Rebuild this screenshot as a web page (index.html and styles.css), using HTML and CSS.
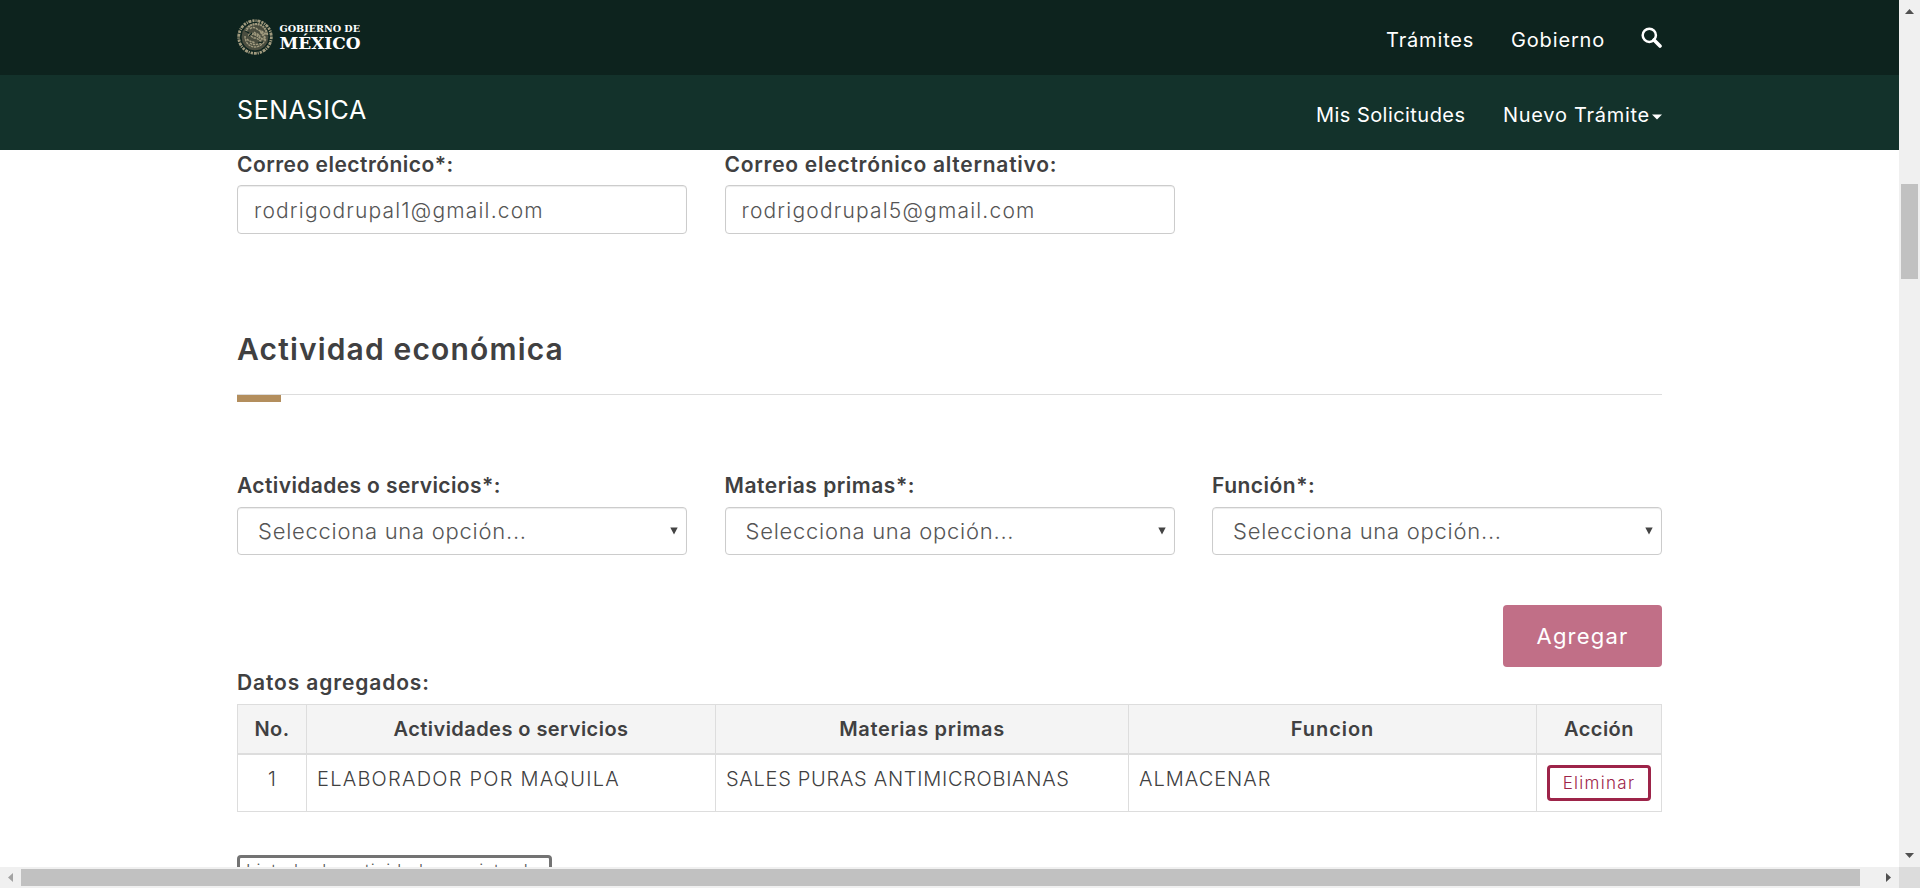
FILE: index.html
```html
<!DOCTYPE html>
<html lang="es">
<head>
<meta charset="utf-8">
<title>SENASICA</title>
<link rel="stylesheet" href="styles.css">
</head>
<body>
<div class="window">
  <div class="viewport">
    <header class="bar bar-top">
      <svg class="logo" width="130" height="50" viewBox="0 0 130 50">
        <circle cx="18" cy="25" r="14" fill="#4a4d3f"/>
        <g fill="none" stroke="#a09a7e">
          <circle cx="18" cy="25" r="16.3" stroke-width="2.8" stroke-dasharray="2.2 1 1.2 .8 3 1"/>
          <circle cx="18" cy="25" r="14" stroke="#0d231e" stroke-width="1"/>
          <path d="M9 20c1-5 5-8 10-8 6 0 10 4 11 10-3 0-4-2-6-2 1 3 4 4 4 7-4 1-6-3-9-4-3-2-6-1-7 1" stroke-width="2.2" stroke-dasharray="2 .6"/>
          <path d="M13 17c2-2 5-2 7 0s4 1 6 3M11 23c3 0 4 3 7 3s4 3 7 3M10 27c2 3 5 2 8 4M8 24c0 7 5 11 10 11s9-4 11-8M13 31c3 2 7 2 11 0M17 20c2 2 5 2 6 4" stroke-width="1.4" stroke-dasharray="2.4 .7"/>
          <path d="M8 19l4 2M15 21l-3 3M21 31l5-1" stroke="#0d231e" stroke-width="1.2"/>
        </g>
        <text class="logo-text" x="42.500" y="20" font-size="9.5" textLength="80.500" lengthAdjust="spacingAndGlyphs">GOBIERNO DE</text>
        <text class="logo-text" x="42.500" y="37" font-size="16.5" textLength="81" lengthAdjust="spacingAndGlyphs">MÉXICO</text>
      </svg>
      <nav class="nav nav-top">
        <a class="t-tramites">Trámites</a>
        <a class="t-gobierno">Gobierno</a>
        <svg class="search" width="21" height="21" viewBox="0 0 21 21" fill="none" stroke="#fff">
          <circle cx="8.3" cy="8.3" r="6.6" stroke-width="2.5"/>
          <path d="M13 13l6 6" stroke-width="3.6" stroke-linecap="round"/>
        </svg>
      </nav>
    </header>
    <header class="bar bar-sub">
      <div class="brand">SENASICA</div>
      <nav class="nav nav-sub">
        <a class="t-solicitudes">Mis Solicitudes</a>
        <a class="t-nuevo">Nuevo Trámite</a>
        <svg class="caret" width="10" height="6" viewBox="0 0 10 6"><path d="M0 .5h10l-5 5z" fill="#fff"/></svg>
      </nav>
    </header>
    <main class="content">
      <div class="fields fields-mail">
        <div class="field">
          <label class="label t-correo">Correo electrónico*:</label>
          <div class="control input">rodrigodrupal1@gmail.com</div>
        </div>
        <div class="field">
          <label class="label t-alterno">Correo electrónico alternativo:</label>
          <div class="control input">rodrigodrupal5@gmail.com</div>
        </div>
      </div>
      <h2 class="title">Actividad económica</h2>
      <div class="title-mark"></div>
      <div class="fields fields-activity">
        <div class="field">
          <label class="label t-actividades">Actividades o servicios*:</label>
          <div class="control select">Selecciona una opción...<svg width="8" height="8" viewBox="0 0 8 8"><path d="M.3.5h7.4L4 7.5z" fill="#444"/></svg></div>
        </div>
        <div class="field">
          <label class="label t-materias">Materias primas*:</label>
          <div class="control select">Selecciona una opción...<svg width="8" height="8" viewBox="0 0 8 8"><path d="M.3.5h7.4L4 7.5z" fill="#444"/></svg></div>
        </div>
        <div class="field">
          <label class="label t-funcion">Función*:</label>
          <div class="control select">Selecciona una opción...<svg width="8" height="8" viewBox="0 0 8 8"><path d="M.3.5h7.4L4 7.5z" fill="#444"/></svg></div>
        </div>
      </div>
      <div class="actions"><button class="btn-add">Agregar</button></div>
      <div class="label t-datos">Datos agregados:</div>
      <table class="table">
        <colgroup><col class="c-no"><col class="c-act"><col class="c-mat"><col class="c-fun"><col class="c-acc"></colgroup>
        <thead>
          <tr><th>No.</th><th>Actividades o servicios</th><th class="h-mat">Materias primas</th><th class="h-fun">Funcion</th><th>Acción</th></tr>
        </thead>
        <tbody>
          <tr><td class="num">1</td><td class="d-act">ELABORADOR POR MAQUILA</td><td class="d-mat">SALES PURAS ANTIMICROBIANAS</td><td class="d-fun">ALMACENAR</td><td class="cell-btn"><button class="btn-del">Eliminar</button></td></tr>
        </tbody>
      </table>
      <button class="btn-list">Listado de actividades registradas</button>
    </main>
  </div>
  <div class="vbar">
    <svg width="9" height="5" viewBox="0 0 9 5"><path d="M0 5h9L4.500 0z" fill="#505050"/></svg>
    <div class="vthumb"></div>
    <svg class="vdown" width="9" height="5" viewBox="0 0 9 5"><path d="M0 0h9L4.500 5z" fill="#505050"/></svg>
  </div>
  <div class="hbar">
    <svg width="5" height="9" viewBox="0 0 5 9"><path d="M5 0v9L0 4.500z" fill="#a3a3a3"/></svg>
    <div class="hthumb"></div>
    <svg class="hright" width="5" height="9" viewBox="0 0 5 9"><path d="M0 0v9l5-4.500z" fill="#505050"/></svg>
  </div>
  <div class="corner"></div>
</div>
</body>
</html>
```
FILE: styles.css
```css
* { box-sizing: border-box; }
body { margin: 0; overflow: hidden; font-family: Inter, "Liberation Sans", sans-serif; color: #404041; background: #fff; }
button { font-family: inherit; margin: 0; padding: 0; }

.window { display: grid; grid-template-columns: 1899px 21px; grid-template-rows: 867px 21px; width: 1920px; height: 888px; }
.viewport { overflow: hidden; background: #fff; }

/* headers */
.bar { display: flex; justify-content: space-between; align-items: flex-start; height: 75px; padding: 0 237px; color: #fff; }
.bar-top { background: #0d231e; }
.bar-sub { background: #13322b; }
.logo { display: block; margin-top: 12px; }
.logo-text { fill: #fff; font-family: "DejaVu Serif", serif; font-weight: 700; }
.nav { display: flex; align-items: flex-start; font-size: 20px; line-height: 20px; white-space: nowrap; }
.nav a { display: block; margin-top: 30px; }
.t-tramites { width: 125px; letter-spacing: .85px; }
.t-gobierno { width: 130px; letter-spacing: .85px; }
.search { margin-top: 27px; }
.brand { margin-top: 23px; font-size: 25px; line-height: 24px; letter-spacing: .6px; }
.t-solicitudes { width: 187px; letter-spacing: .45px; }
.t-nuevo { width: 149px; letter-spacing: .72px; }
.caret { margin: 39px 0 0 0; }

/* form */
.content { width: 1425px; margin-left: 237px; }
.fields { display: grid; grid-template-columns: repeat(3, 450px); column-gap: 37.5px; }
.fields-mail { padding-top: 5px; }
.fields-activity { padding-top: 74px; }
.label { display: block; font-size: 21px; line-height: 20px; font-weight: 600; white-space: nowrap; }
.t-correo { letter-spacing: .48px; }
.t-alterno { letter-spacing: .74px; }
.t-actividades { letter-spacing: .39px; }
.t-materias { letter-spacing: .52px; }
.t-funcion { letter-spacing: .5px; }
.t-datos { padding-top: 6px; letter-spacing: .87px; }
.control { display: flex; align-items: center; border: 1px solid #ccc; border-radius: 4px; box-shadow: inset 0 1px 1px rgba(0,0,0,.075); font-weight: 300; color: #555; background: #fff; }
.input { height: 49px; margin-top: 10px; padding: 2px 16px 0; font-size: 21px; letter-spacing: 1.19px; }
.select { height: 48px; margin-top: 11px; padding: 0 8px 0 20px; justify-content: space-between; font-size: 22px; letter-spacing: .74px; }
.title { margin: 100px 0 0; padding-bottom: 30px; border-bottom: 1px solid #ddd; font-size: 30px; line-height: 30px; font-weight: 600; letter-spacing: 1.16px; }
.title-mark { width: 44px; height: 7px; background: #b38e5d; }
.actions { display: flex; justify-content: flex-end; padding-top: 50px; }
.btn-add { width: 159px; height: 62px; border: 0; border-radius: 4px; background: #c16f87; color: #fff; font-size: 22px; letter-spacing: 1.2px; }

/* table */
.table { width: 1425px; margin-top: 11px; table-layout: fixed; border-collapse: separate; border-spacing: 0; border: 1px solid #ddd; border-width: 1px 0 0 1px; font-size: 20px; line-height: 20px; }
.c-no { width: 69px; }
.c-act { width: 409px; }
.c-mat { width: 413px; }
.c-fun { width: 408px; }
.c-acc { width: 125px; }
.table th { height: 50px; padding: 0; border: 1px solid #ddd; border-width: 0 1px 2px 0; background: #f4f4f4; font-weight: 600; letter-spacing: .44px; }
.table .h-mat { letter-spacing: .66px; }
.table .h-fun { letter-spacing: .95px; }
.table td { height: 57px; padding: 14px 10px 0; border: 1px solid #ddd; border-width: 0 1px 1px 0; vertical-align: top; font-weight: 300; white-space: nowrap; }
.table .num { text-align: center; }
.table .d-act { letter-spacing: 1.24px; }
.table .d-mat { letter-spacing: .71px; }
.table .d-fun { letter-spacing: 1px; }
.table .cell-btn { padding: 10px 0 0 10px; }
.btn-del { display: block; width: 104px; height: 36px; border: 3px solid #9d2449; border-radius: 4px; background: #fff; color: #9d2449; font-size: 17px; font-weight: 300; letter-spacing: 1.3px; }
.btn-list { display: block; width: 315px; height: 32px; margin-top: 43px; padding-left: 6px; border: 3px solid #737373; border-radius: 4px; background: #fff; color: #545454; font-size: 17px; font-weight: 300; text-align: left; white-space: nowrap; letter-spacing: 1px; }

/* scrollbars */
.vbar { display: flex; flex-direction: column; align-items: center; padding: 9px 0; background: #f0f0f0; }
.vthumb { width: 17px; height: 95px; margin-top: 170px; background: #c1c1c1; }
.vdown { margin-top: auto; }
.hbar { display: flex; align-items: center; padding: 0 8px; background: #f0f0f0; }
.hthumb { width: 1839px; height: 17px; margin-left: 8px; background: #c1c1c1; }
.hright { margin-left: auto; }
.corner { background: #dcdcdc; }
```
